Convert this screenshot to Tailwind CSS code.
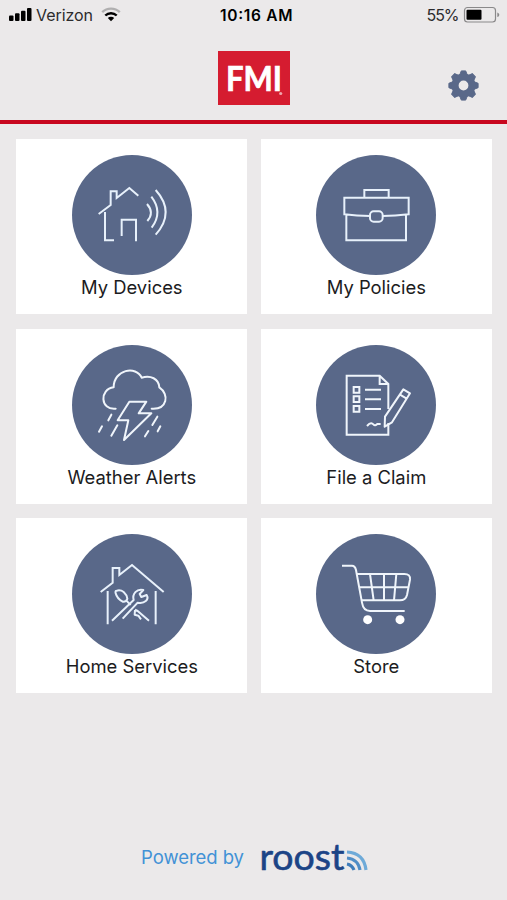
<!DOCTYPE html>
<html lang="en">
<head>
    <meta charset="UTF-8">
    <meta name="viewport" content="width=device-width, initial-scale=1.0">
    <title>FMI</title>
    <script src="https://cdn.jsdelivr.net/npm/@tailwindcss/browser@4"></script>
</head>
<body class="bg-[#ebe9ea] font-[Inter,sans-serif] text-[#1c1c1e]">

    <div class="flex flex-col h-[900px] w-[507px] overflow-hidden">
        <!-- Status bar -->
        <div class="h-[30px] shrink-0">
            <svg class="block" width="507" height="30" viewBox="0 0 507 30">
                <g fill="#000">
                    <rect x="9" y="15.5" width="4.5" height="5.5" rx="1"/>
                    <rect x="15" y="13.2" width="4.5" height="7.8" rx="1"/>
                    <rect x="21" y="10.7" width="4.5" height="10.3" rx="1"/>
                    <rect x="27" y="8" width="4.5" height="13" rx="1"/>
                </g>
                <text x="36" y="20.5" font-size="16" textLength="57" fill="#2b2b2d">Verizon</text>
                <g fill="none" stroke-width="2.4">
                    <path d="M102.2 12.2a12.6 12.6 0 0 1 17.6 0" stroke="#b0afb0"/>
                    <path d="M105.3 15.5a8.2 8.2 0 0 1 11.4 0" stroke="#000"/>
                </g>
                <path d="M107.8 18a4.6 4.6 0 0 1 6.4 0l-3.2 3.2z" fill="#000"/>
                <text x="220" y="20.5" font-size="15.5" font-weight="600" textLength="72.5">10:16 AM</text>
                <text x="426.5" y="20.5" font-size="16" textLength="33" fill="#2b2b2d">55%</text>
                <rect x="464.5" y="7.5" width="31" height="14.5" rx="3" fill="none" stroke="#8a898a" stroke-width="1.2"/>
                <rect x="466.5" y="9.7" width="15" height="10" rx="1" fill="#000"/>
                <path d="M497.3 12.5c2.6.8 2.6 3.8 0 4.6z" fill="#8a898a"/>
            </svg>
        </div>

        <!-- Header -->
        <header class="flex h-[94px] shrink-0 border-b-4 border-[#c8071f]">
            <div class="mt-[21.4px] ml-[218px] h-[54px] w-[72px] bg-[#d51c30]">
                <svg class="block overflow-visible" width="72" height="54" viewBox="0 0 72 54" fill="#fff">
                    <text x="8" y="39.5" font-family="Lato" font-weight="700" font-size="34.5" textLength="56" lengthAdjust="spacingAndGlyphs" stroke="#fff" stroke-width=".7">FMI</text>
                    <circle cx="62.7" cy="42.5" r="1.6" fill="#f0a5ac"/>
                </svg>
            </div>
            <svg class="mt-[40px] ml-[158px]" width="31" height="31" viewBox="-15.5 -15.5 31 31">
                <g fill="#596889" stroke="#596889" stroke-linejoin="round">
                    <path d="M-4-10-2.2-14.6h4.4L4-10ZM-4 10-2.2 14.6h4.4L4 10ZM10-4 14.6-2.2v4.4L10 4ZM-10-4-14.6-2.2v4.4L-10 4Z"/>
                    <path transform="rotate(45)" d="M-4-10-2.2-14.6h4.4L4-10ZM-4 10-2.2 14.6h4.4L4 10ZM10-4 14.6-2.2v4.4L10 4ZM-10-4-14.6-2.2v4.4L-10 4Z"/>
                </g>
                <circle r="8.4" fill="none" stroke="#596889" stroke-width="7"/>
            </svg>
        </header>

        <!-- Tiles -->
        <main class="grid grid-cols-[231px_231px] auto-rows-[175px] gap-x-[13.5px] gap-y-[14.6px] pt-[15px] pl-[16.3px] text-[18.4px] leading-[25px]">
            <a class="flex flex-col items-center bg-white pt-[16px]">
                <svg class="h-[120px] w-[120px] shrink-0" viewBox="35 30 360 360">
                    <circle cx="215" cy="210" r="180" fill="#596889"/>
                    <g fill="none" stroke="#e8f1fb" stroke-width="6">
                        <path d="M115 207 151 180V139H169V159L207 129 234 152"/>
                        <path d="M134 201V286H161M184 273V224H227V289"/>
                        <path d="M260 177Q283 203 261 228M273 155Q309 202 274 248M286 135Q346 202 286 269"/>
                    </g>
                </svg>
                <span>My Devices</span>
            </a>
            <a class="flex flex-col items-center bg-white pt-[16px]">
                <svg class="h-[120px] w-[120px] shrink-0" viewBox="33 30 360 360">
                    <circle cx="213" cy="210" r="180" fill="#596889"/>
                    <g fill="none" stroke="#e8f1fb" stroke-width="6">
                        <path d="M178 157V135H251V157M195 213Q155 213 118 208V158H311V208Q270 213 233 213M124 210V286H303V210"/>
                        <rect x="195" y="199" width="38" height="31" rx="11"/>
                    </g>
                </svg>
                <span>My Policies</span>
            </a>
            <a class="flex flex-col items-center bg-white pt-[16px]">
                <svg class="h-[120px] w-[120px] shrink-0" viewBox="35 28 360 360">
                    <circle cx="215" cy="208" r="180" fill="#596889"/>
                    <g fill="none" stroke="#f0f5fb" stroke-width="6" stroke-linecap="round" stroke-linejoin="round">
                        <path d="M166 219C119 224 117 160 160 155C160 101 228 89 244 126C271 118 295 129 297 155C328 176 321 222 274 219"/>
                        <path d="M207 198H258L235 233H273L191 313 204 254H172Z"/>
                        <path d="M153 237 144 254M125 272 116 288M171 269 153 300M291 243 276 268M264 286 254 302M300 272 292 287"/>
                    </g>
                </svg>
                <span>Weather Alerts</span>
            </a>
            <a class="flex flex-col items-center bg-white pt-[16px]">
                <svg class="h-[120px] w-[120px] shrink-0" viewBox="33 28 360 360">
                    <circle cx="213" cy="208" r="180" fill="#596889"/>
                    <g fill="none" stroke="#f0f5fb" stroke-width="6">
                        <path d="M250 220V145L224 120H125V297H250V262M224 120V145H250"/>
                        <path d="M146 154h17v17h-17zM146 182h17v17h-17zM146 211h17v17h-17zM180 162H228M180 191H228M180 220H228"/>
                        <path d="M240 243 295 161 315 173 261 260 239 273ZM285 177 305 189" stroke-linejoin="round"/>
                        <path d="M186 271C197 258 202 263 206 267Q210 272 217 265H227"/>
                    </g>
                </svg>
                <span>File a Claim</span>
            </a>
            <a class="flex flex-col items-center bg-white pt-[16px]">
                <svg class="h-[120px] w-[120px] shrink-0" viewBox="35 28 360 360">
                    <circle cx="215" cy="208" r="180" fill="#596889"/>
                    <g fill="none" stroke="#e8f1fb" stroke-width="6">
                        <path d="M121 202 157 174V130H177V151L215 121 310 202M142 199V299M286 199V299"/>
                        <path d="M169 198Q181 195 190 202Q200 211 201 222Q198 232 187 231Q170 222 166 206Q164 198 169 198ZM198 228 211 241M224 255 232 259 266 288M224 256 223 270 234 273 242 284" stroke-linejoin="round"/>
                        <path d="M155 288 220 226C215 208 229 191 249 196L238 208 243 217 259 211C267 225 253 238 232 234L187 282" stroke-linejoin="round"/>
                    </g>
                </svg>
                <span>Home Services</span>
            </a>
            <a class="flex flex-col items-center bg-white pt-[16px]">
                <svg class="h-[120px] w-[120px] shrink-0" viewBox="33 28 360 360">
                    <circle cx="213" cy="208" r="180" fill="#596889"/>
                    <g fill="none" stroke="#f0f5fb" stroke-width="6">
                        <path d="M111 123H141Q150 123 153 136L171 234Q175 259 195 259H299"/>
                        <path d="M156 148H298Q317 148 315 165L306 211Q302 227 285 227H170M163 188H310M195 148 206 227M237 148V227M274 148 267 227"/>
                    </g>
                    <circle cx="188" cy="285" r="13.5" fill="#fff"/>
                    <circle cx="285" cy="285" r="13.5" fill="#fff"/>
                </svg>
                <span>Store</span>
            </a>
        </main>

        <!-- Footer -->
        <footer class="mt-auto h-[65px] pl-[130px]">
            <svg class="block overflow-visible" width="250" height="45" viewBox="0 0 250 45">
                <text x="11" y="28.5" font-size="18.5" textLength="103" fill="#4292d6">Powered by</text>
                <text x="129.5" y="34.5" font-family="Lato" font-size="37.5" textLength="85" lengthAdjust="spacingAndGlyphs" fill="#1c4486" stroke="#1c4486" stroke-width=".6" stroke-linejoin="round">roost</text>
                <g fill="none" stroke-width="3.2">
                    <path d="M217 17Q234 18 236 35" stroke="#6eaad8"/>
                    <path d="M217 23Q228 24 230 35" stroke="#4f8dc6"/>
                    <path d="M217 29Q222 30 224 35" stroke="#3f7dba"/>
                </g>
            </svg>
        </footer>
    </div>

</body>
</html>
